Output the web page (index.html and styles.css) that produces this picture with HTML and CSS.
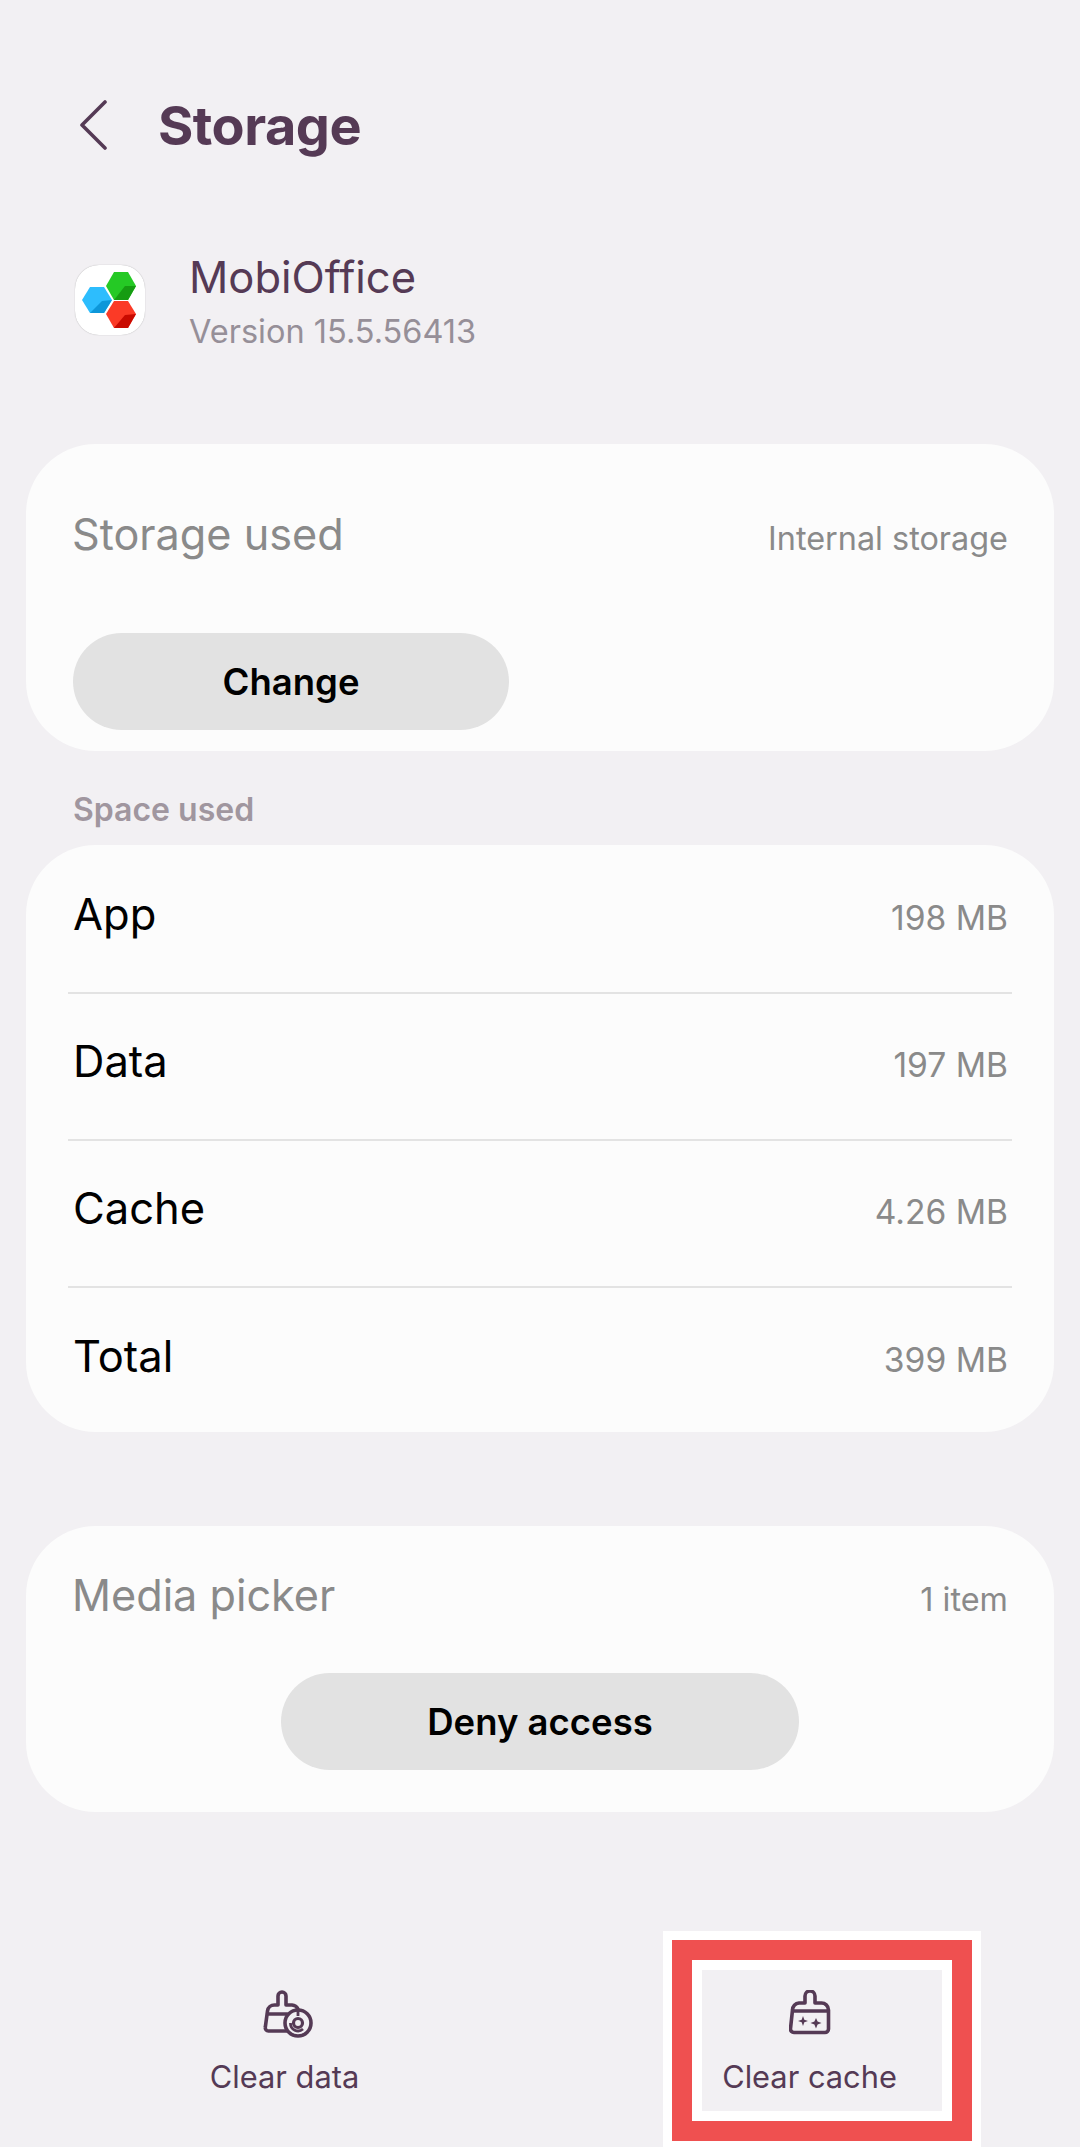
FILE: index.html
```html
<!DOCTYPE html>
<html lang="en">
<head>
    <meta charset="UTF-8">
    <meta name="viewport" content="width=device-width, initial-scale=1.0">
    <title>Storage</title>
    <link rel="stylesheet" href="styles.css">
</head>
<body>
    <header class="top-bar">
        <svg class="back-icon" viewBox="0 0 28 50" width="28" height="50">
            <path d="M26 2 L3 25 L26 48" fill="none" stroke="#553a55" stroke-width="3.6" stroke-linecap="round" stroke-linejoin="round"/>
        </svg>
        <h1 class="page-title">Storage</h1>
    </header>

    <section class="app-info">
        <div class="app-icon">
            <svg viewBox="0 0 70 70" width="70" height="70">
                <polygon points="15,22 29,22 37,35 29,48 15,48 7,35" fill="#2dbdfd"/>
                <polygon points="27,36 37,35 29,48 15,48" fill="#0d97d9"/>
                <polygon points="39,7 53,7 61,21 53,35 39,35 31,21" fill="#25c925"/>
                <polygon points="50,21 61,21 53,35 39,35" fill="#169c12"/>
                <polygon points="39,36 53,36 61,49 53,63 39,63 31,49" fill="#fb3a26"/>
                <polygon points="50,50 61,49 53,63 39,63" fill="#c90a00"/>
            </svg>
        </div>
        <div class="app-text">
            <div class="app-name">MobiOffice</div>
            <div class="app-version">Version 15.5.56413</div>
        </div>
    </section>

    <section class="card storage-card">
        <div class="row-head">
            <span class="card-title">Storage used</span>
            <span class="value">Internal storage</span>
        </div>
        <button class="pill change-btn">Change</button>
    </section>

    <h2 class="section-label">Space used</h2>

    <section class="card space-card">
        <div class="space-row"><span class="row-name">App</span><span class="value">198 MB</span></div>
        <div class="space-row"><span class="row-name">Data</span><span class="value">197 MB</span></div>
        <div class="space-row"><span class="row-name">Cache</span><span class="value">4.26 MB</span></div>
        <div class="space-row"><span class="row-name">Total</span><span class="value">399 MB</span></div>
    </section>

    <section class="card media-card">
        <div class="row-head">
            <span class="card-title">Media picker</span>
            <span class="value">1 item</span>
        </div>
        <button class="pill deny-btn">Deny access</button>
    </section>

    <footer class="actions">
        <div class="action">
            <svg class="data-icon" viewBox="0 0 52 50" width="52" height="50">
                <path d="M24 41 H5.5 a3.2 3.2 0 0 1 -3.2 -3.8 L4.5 21 a7 7 0 0 1 7 -6 H15 V6 a4 4 0 0 1 8 0 V15 H29 a7 7 0 0 1 6 4 M4 24 H24" fill="none" stroke="#553a55" stroke-width="3.6" stroke-linecap="round" stroke-linejoin="round"/>
                <circle cx="35" cy="33" r="13" fill="#f2f0f3" stroke="#553a55" stroke-width="3.6"/>
                <circle cx="35" cy="33" r="4.5" fill="none" stroke="#553a55" stroke-width="3.2"/>
                <path d="M35 21 V26 M27.5 33 a7.5 7.5 0 0 0 12.5 6" fill="none" stroke="#553a55" stroke-width="2.8"/>
            </svg>
            <span class="action-label">Clear data</span>
        </div>
        <div class="action">
            <svg class="cache-icon" viewBox="0 0 42 46" width="42" height="46">
                <path d="M10 13 H16 V6 a5 5 0 0 1 10 0 V13 H32 a7 7 0 0 1 7.5 7 V39 a3.5 3.5 0 0 1 -3.5 3.5 H5 a3.5 3.5 0 0 1 -3.5 -4 L3.5 20 a7 7 0 0 1 6.5 -7 Z M3.5 21 H39" fill="none" stroke="#553a55" stroke-width="3.6" stroke-linecap="round" stroke-linejoin="round"/>
                <path d="M14 26 L15.3 29.7 L19 31 L15.3 32.3 L14 36 L12.7 32.3 L9 31 L12.7 29.7 Z M27 28 L28.6 31.4 L32.5 33 L28.6 34.6 L27 38.5 L25.4 34.6 L21.5 33 L25.4 31.4 Z" fill="#553a55"/>
            </svg>
            <span class="action-label">Clear cache</span>
            <div class="highlight"></div>
        </div>
    </footer>
</body>
</html>
```
FILE: styles.css
```css
html, body {
    margin: 0;
    padding: 0;
}

body {
    width: 1080px;
    height: 2147px;
    overflow: hidden;
    background-color: #f2f0f3;
    font-family: Inter, "Noto Sans", sans-serif;
    box-sizing: border-box;
    padding-top: 95px;
}

.top-bar {
    display: flex;
    align-items: center;
    height: 60px;
    padding-left: 79px;
}

.back-icon {
    flex: none;
}

.page-title {
    margin: 0 0 0 51px;
    font-size: 54px;
    font-weight: 700;
    letter-spacing: -0.5px;
    color: #553a55;
}

.app-info {
    display: flex;
    align-items: flex-start;
    height: 70px;
    margin-top: 110px;
    padding-left: 75px;
}

.app-icon {
    width: 70px;
    height: 70px;
    background-color: #fff;
    border-radius: 24px;
    box-shadow: 0 0 1px rgba(0, 0, 0, 0.35);
}

.app-text {
    margin: -14px 0 0 44px;
}

.app-name {
    font-size: 43.5px;
    line-height: 52px;
    color: #553a55;
}

.app-version {
    font-size: 32.5px;
    line-height: 44px;
    margin-top: 7px;
    color: #968f98;
}

.card {
    margin: 0 26px;
    background-color: #fcfcfc;
    border-radius: 70px;
}

.storage-card {
    margin-top: 109px;
    height: 307px;
    box-sizing: border-box;
    padding: 65px 46px 0 46px;
}

.row-head {
    display: flex;
    justify-content: space-between;
    align-items: center;
    height: 50px;
}

.row-head .value {
    margin-top: 8px;
    font-size: 32.4px;
}

.card-title {
    font-size: 43.2px;
    color: #8a8a8a;
}

.value {
    font-size: 33.6px;
    color: #8a8a8a;
}

.pill {
    display: block;
    height: 97px;
    border: none;
    border-radius: 49px;
    background-color: #e2e2e2;
    color: #000;
    font-family: inherit;
    font-size: 36.5px;
    font-weight: 600;
}

.change-btn {
    width: 436px;
    margin: 74px 0 0 1px;
}

.section-label {
    margin: 39px 0 0 73px;
    height: 55px;
    font-size: 32px;
    line-height: 40px;
    font-weight: 600;
    color: #a0969f;
}

.space-card {
    height: 587px;
    box-sizing: border-box;
    padding: 2px 42px 0 42px;
}

.space-row {
    display: flex;
    justify-content: space-between;
    align-items: center;
    height: 147px;
    box-sizing: border-box;
    padding: 0 4px 0 5px;
    border-bottom: 2px solid #e3e3e3;
}

.space-row .value {
    margin-bottom: 4px;
}

.space-row:last-child {
    border-bottom: none;
}

.row-name {
    font-size: 43.5px;
    margin-bottom: 12px;
    color: #000;
}

.media-card {
    margin-top: 94px;
    height: 286px;
    box-sizing: border-box;
    padding: 44px 46px 0 46px;
}

.deny-btn {
    width: 518px;
    margin: 53px auto 0 auto;
}

.actions {
    display: grid;
    grid-template-columns: 525px 525px;
    margin-top: 178px;
    padding-left: 22px;
}

.action {
    position: relative;
    display: flex;
    flex-direction: column;
    align-items: center;
}

.data-icon {
    margin: 0 0 -4px 8px;
}

.action-label {
    margin-top: 20px;
    font-size: 30.8px;
    line-height: 42px;
    color: #553a55;
}

/* red marker drawn over the button in the screenshot */
.highlight {
    position: absolute;
    left: 125px;
    top: -50px;
    width: 300px;
    height: 201px;
    box-sizing: border-box;
    border: 20px solid #ef5050;
    box-shadow: 0 0 0 9px #fff, inset 0 0 0 10px #fff;
}
```
